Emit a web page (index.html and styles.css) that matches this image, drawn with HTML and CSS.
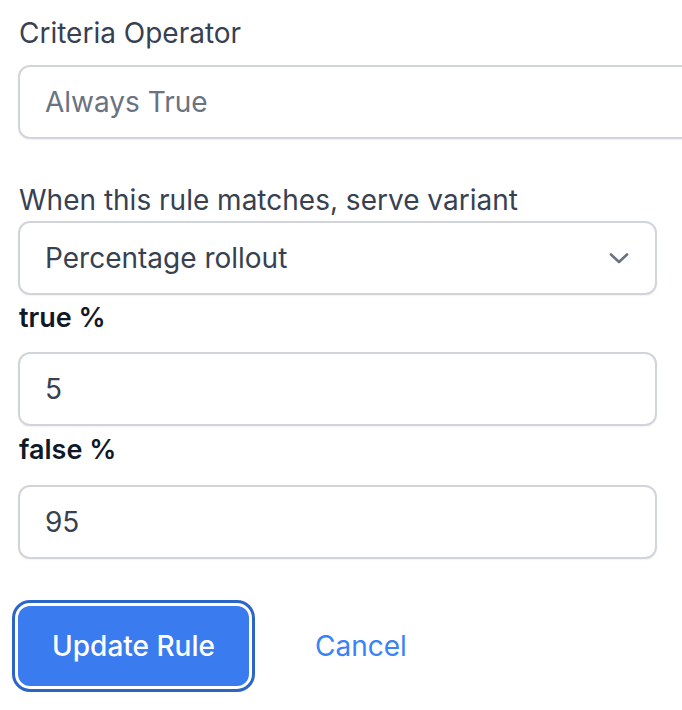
FILE: index.html
```html
<!DOCTYPE html>
<html>
<head>
<meta charset="utf-8">
<link rel="stylesheet" href="styles.css">
</head>
<body>
<form class="form">
  <label class="label label-first">Criteria Operator</label>
  <div class="field field-wide"><span class="placeholder">Always True</span></div>

  <label class="label label-gap">When this rule matches, serve variant</label>
  <div class="field field-select">
    <span class="value">Percentage rollout</span>
    <svg class="chevron" width="24" height="24" viewBox="0 0 24 24" fill="none"><path d="M4 8.5l8 7.5 8-7.5" stroke="#6b7280" stroke-width="2.6" stroke-linecap="round" stroke-linejoin="round"/></svg>
  </div>

  <label class="label label-bold label-true">true %</label>
  <div class="field field-input"><span class="value">5</span></div>

  <label class="label label-bold label-false">false %</label>
  <div class="field field-input"><span class="value">95</span></div>

  <div class="actions">
    <button type="button" class="btn-primary">Update Rule</button>
    <a class="btn-link">Cancel</a>
  </div>
</form>
</body>
</html>
```
FILE: styles.css
```css
html, body {
  margin: 0;
  padding: 0;
  background: #ffffff;
  overflow: hidden;
}
body {
  font-family: Inter, "Noto Sans", sans-serif;
  width: 682px;
  height: 710px;
}
.form {
  box-sizing: border-box;
  padding-left: 18px;
  padding-top: 13px;
  width: 682px;
  height: 710px;
  overflow: hidden;
}
.label {
  display: block;
  font-size: 28px;
  line-height: 40px;
  color: #374151;
  padding-left: 1px;
}
.label-first { margin-bottom: 12px; }
.label-gap { margin-top: 41px; margin-bottom: 1px; }
.label-bold {
  font-weight: 600;
  font-size: 27px;
  color: #111827;
}
.label-true { margin-top: 3px; margin-bottom: 14px; }
.label-false { margin-top: 4px; margin-bottom: 15px; }

.field {
  box-sizing: border-box;
  height: 74px;
  border: 2px solid #d1d5db;
  border-radius: 12px;
  box-shadow: 0 1px 2px rgba(0, 0, 0, 0.06);
  display: flex;
  align-items: center;
  padding: 0 25px;
  font-size: 28px;
  color: #374151;
  background: #fff;
}
.field-wide { width: 700px; }
.field-select, .field-input { width: 639px; }
.field-select { justify-content: space-between; padding-right: 24px; }
.placeholder { color: #6b7280; }
.chevron { display: block; }

.actions {
  display: flex;
  align-items: center;
  margin-top: 47px;
  gap: 66px;
}
.btn-primary {
  box-sizing: border-box;
  width: 231px;
  height: 80px;
  border: none;
  border-radius: 12px;
  background: #3a7cef;
  color: #ffffff;
  font-family: Inter, "Noto Sans", sans-serif;
  font-size: 28px;
  font-weight: 500;
  box-shadow: 0 0 0 3px #ffffff, 0 0 0 6px #2c64c8;
  padding: 0;
}
.btn-link {
  color: #3b82f6;
  font-size: 28px;
  font-weight: 400;
  text-decoration: none;
}
```
